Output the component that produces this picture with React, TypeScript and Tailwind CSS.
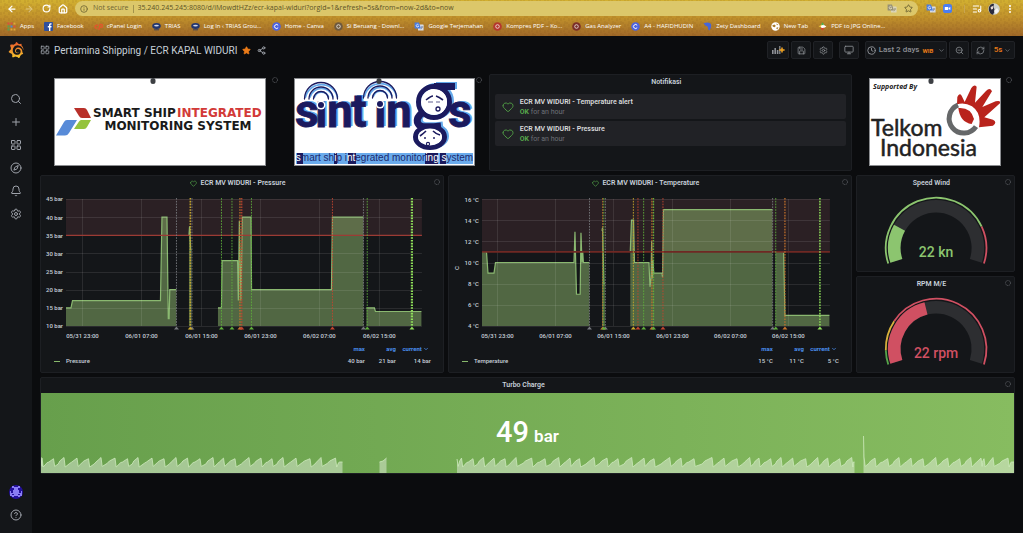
import React from "react";
import {
  ArrowLeft, ArrowRight, RotateCw, House, Info, Star, EllipsisVertical, ListMusic, Search, Plus, LayoutGrid,
  Compass, Bell, Settings, CircleHelp, Heart, Save, Monitor, Clock, ZoomOut, RefreshCw, ChevronDown, Share2,
} from "lucide-react";
import { SiGrafana } from "react-icons/si";

type Point = [number, number];
type Mark = { x: number; color: string; width?: number };

/* ---------- browser bar ---------- */

function AppsIcon() {
  const colors = ["#d9503f", "#d9503f", "#e0a63a", "#5aa052", "#4d86d8", "#d9503f", "#5aa052", "#e0a63a", "#e0a63a"];
  return (
    <svg viewBox="0 0 9 9" className="size-[9px]">
      {colors.map((c, i) => (
        <rect key={i} x={(i % 3) * 3 + 0.5} y={Math.floor(i / 3) * 3 + 0.5} width="2" height="2" fill={c} />
      ))}
    </svg>
  );
}

function Disc({ fill, letter }: { fill: string; letter?: "C" | "o" }) {
  return (
    <svg viewBox="0 0 9 9" className="size-[9px]" fill="none" stroke="#fff">
      <circle cx="4.5" cy="4.5" r="4.3" fill={fill} stroke="none" />
      {letter === "C" && <path d="M6.2 3.4A2 2 0 1 0 6.2 5.6" strokeWidth="1" />}
      {letter === "o" && <circle cx="4.5" cy="4.5" r="1.8" strokeWidth="1" strokeOpacity="0.7" />}
    </svg>
  );
}

function FacebookIcon() {
  return (
    <svg viewBox="0 0 9 9" className="size-[9px]">
      <rect width="9" height="9" rx="1" fill="#2f4f9c" />
      <path d="M5 9V5.4H3.8V4H5V3.1C5 1.9 5.7 1.3 6.7 1.3H7.6V2.6H7C6.5 2.6 6.4 2.9 6.4 3.3V4H7.6L7.4 5.4H6.4V9Z" fill="#fff" />
    </svg>
  );
}

function CpanelIcon() {
  return (
    <svg viewBox="0 0 9 9" className="size-[9px]" fill="none" stroke="#e0582c" strokeWidth="1.4">
      <path d="M4 3.2H2.6A1.6 1.6 0 0 0 2.6 6.4H3.4M4.8 8L6 2.4H7A1.4 1.4 0 0 1 7 5.4H6" />
    </svg>
  );
}

function TriasIcon() {
  return (
    <svg viewBox="0 0 9 9" className="size-[9px]">
      <ellipse cx="4.5" cy="4" rx="4.3" ry="3" fill="#23366f" />
      <ellipse cx="4.5" cy="3.6" rx="2.4" ry="0.9" fill="#cfd6ea" />
      <rect x="2" y="7.3" width="5" height="1" fill="#3a3f5c" />
    </svg>
  );
}

function TranslateIcon() {
  return (
    <svg viewBox="0 0 10 9" className="h-[9px] w-[10px]">
      <rect x="4" y="2.6" width="5.6" height="6" rx="0.6" fill="#d5dbe6" />
      <path d="M0.6 0.6H5L7 6.6H1.2A0.6 0.6 0 0 1 0.6 6Z" fill="#4b7de0" />
      <path d="M4.6 3A1.3 1.3 0 1 0 4.7 4.2H3.6" fill="none" stroke="#fff" strokeWidth="0.7" />
      <path d="M7 5H9M8 4.4V5Q7.8 6.6 6.9 7.2" fill="none" stroke="#5a6a86" strokeWidth="0.6" />
    </svg>
  );
}

function ZetyIcon() {
  return (
    <svg viewBox="0 0 9 9" className="size-[9px]">
      <path d="M0.5 1.2Q5 -0.2 7.5 1.4Q9.4 4 6.4 8.6Q4.8 8 5 5.4Q4.4 3.8 2.6 3.8Z" fill="#4665d8" />
    </svg>
  );
}

function GlobeIcon() {
  return (
    <svg viewBox="0 0 9 9" className="size-[9px]">
      <circle cx="4.5" cy="4.5" r="4.2" fill="#fff" />
      <path d="M1.2 3.4L3.4 2.4L4.8 3.8L3.8 5.2L2 4.8ZM5.2 1.4L7.4 2.8L6 3.2ZM5 6L7.4 5L6.4 7.4Z" fill="#a97a2a" />
    </svg>
  );
}

function PdfIcon() {
  return (
    <svg viewBox="0 0 9 9" className="size-[9px]">
      <path d="M4.5 0.2L6.6 3.4H2.4Z" fill="#4fae4d" />
      <path d="M0.6 4.2L3.8 2.6V6Z" fill="#e8c33c" />
      <path d="M8.4 4.6L5.2 2.6V6.4Z" fill="#fff" />
      <path d="M4.5 8.8L2.6 5.6H6.4Z" fill="#d9402c" />
      <circle cx="4.5" cy="4.5" r="1.6" fill="#fff" />
    </svg>
  );
}

const bookmarks: { label: string; icon: React.ReactNode }[] = [
  { label: "Apps", icon: <AppsIcon /> },
  { label: "Facebook", icon: <FacebookIcon /> },
  { label: "cPanel Login", icon: <CpanelIcon /> },
  { label: "TRIAS", icon: <TriasIcon /> },
  { label: "Log In ‹ TRIAS Grou...", icon: <TriasIcon /> },
  { label: "Home - Canva", icon: <Disc fill="#4d63e0" letter="C" /> },
  { label: "Si Beruang - Downl...", icon: <Disc fill="#6f5a3e" letter="o" /> },
  { label: "Google Terjemahan", icon: <TranslateIcon /> },
  { label: "Kompres PDF – Ko...", icon: <Disc fill="#b5382e" letter="o" /> },
  { label: "Gas Analyzer", icon: <Disc fill="#7c2f28" letter="o" /> },
  { label: "A4 - HAFIDHUDIN", icon: <Disc fill="#4d63e0" letter="C" /> },
  { label: "Zety Dashboard", icon: <ZetyIcon /> },
  { label: "New Tab", icon: <GlobeIcon /> },
  { label: "PDF to JPG Online...", icon: <PdfIcon /> },
];

function BrowserBar() {
  const nav = "flex items-center justify-center text-white";
  return (
    <header className="relative shrink-0 overflow-hidden bg-linear-to-b from-[#d2b030] via-[#c0902b] to-[#9f6828] font-['Open_Sans','Noto_Sans',sans-serif] text-[7px]">
      <svg className="absolute inset-0 size-full" aria-hidden="true">
        <defs>
          <pattern id="weave" width="8" height="6" patternUnits="userSpaceOnUse">
            <path d="M1 0V3M5 3V6M3 1H5M6 5H8" stroke="#6d4310" strokeOpacity="0.18" strokeWidth="1" fill="none" />
          </pattern>
        </defs>
        <rect width="100%" height="100%" fill="url(#weave)" />
      </svg>
      <div className="relative flex h-[17px] items-center pr-2 pl-[6px]">
        <button aria-label="Back" className={`${nav} w-3`}><ArrowLeft size={10} strokeWidth={3} /></button>
        <button aria-label="Forward" className={`${nav} ml-[5px] w-3 opacity-40`}><ArrowRight size={10} strokeWidth={2.5} /></button>
        <button aria-label="Reload" className={`${nav} ml-[5px] w-3`}><RotateCw size={9} strokeWidth={3} /></button>
        <button aria-label="Home" className={`${nav} ml-[5px] w-3`}><House size={10} strokeWidth={3} /></button>
        <div className="ml-[6px] flex h-[15px] flex-1 items-center rounded-full bg-[#dcc76a] pr-[5px] pl-[5px] text-[#6f6534]">
          <Info size={8} strokeWidth={2.5} className="shrink-0" />
          <span className="ml-[5px] whitespace-nowrap">Not secure</span>
          <span className="mx-1 h-2 w-px bg-[#a3934c]" />
          <input
            aria-label="Address"
            readOnly
            value="35.240.245.245:8080/d/iMowdtHZz/ecr-kapal-widuri?orgId=1&refresh=5s&from=now-2d&to=now"
            className="min-w-0 flex-1 bg-transparent text-[#5d5428] outline-none"
          />
          <button aria-label="Translate page" className="opacity-70 grayscale"><TranslateIcon /></button>
          <button aria-label="Bookmark" className="ml-[7px]"><Star size={9} strokeWidth={2.5} /></button>
        </div>
        <button aria-label="Translate" className="ml-2"><TranslateIcon /></button>
        <button aria-label="Zoom" className="ml-[7px]">
          <svg viewBox="0 0 9 9" className="size-[9px]">
            <rect width="9" height="9" rx="2.6" fill="#4a7df0" />
            <path d="M1.8 3H5.2V6H1.8ZM5.7 4L7.3 3V6L5.7 5Z" fill="#fff" />
          </svg>
        </button>
        <span className="ml-3 h-2 w-px bg-[#c9a550]" />
        <button aria-label="Media" className="ml-[7px] text-white"><ListMusic size={10} strokeWidth={2.5} /></button>
        <button aria-label="Profile" className="ml-[6px]">
          <svg viewBox="0 0 12 12" className="size-3">
            <circle cx="6" cy="6" r="5.8" fill="#cfd2cd" />
            <path d="M3 11Q0 8 1 4Q3 0 6 1Q4.6 4 6.4 6Q7 9 5 11.7Z" fill="#2a2c3e" />
            <path d="M2.6 4L5 3L5 6L3 6.6Z" fill="#e9d8cf" />
            <path d="M6 8L9 5L11 8L8 11Z" fill="#f6f6f2" />
          </svg>
        </button>
        <button aria-label="Menu" className="ml-[5px] text-white"><EllipsisVertical size={10} strokeWidth={3} /></button>
      </div>
      <nav className="relative flex h-[19px] items-center gap-[10px] overflow-hidden pl-[7px] text-[6px] font-medium text-white">
        {bookmarks.map((b) => (
          <a key={b.label} href="#" className="flex shrink-0 items-center gap-1 whitespace-nowrap">
            {b.icon}
            {b.label}
          </a>
        ))}
      </nav>
    </header>
  );
}

/* ---------- side menu ---------- */

const menu = [
  { label: "Search", Icon: Search },
  { label: "Create", Icon: Plus },
  { label: "Dashboards", Icon: LayoutGrid },
  { label: "Explore", Icon: Compass },
  { label: "Alerting", Icon: Bell },
  { label: "Configuration", Icon: Settings },
];

function SideMenu() {
  return (
    <aside className="flex w-8 shrink-0 flex-col items-center bg-[#141619] pb-3 text-[#9fa3ab]">
      <svg className="absolute size-0" aria-hidden="true">
        <defs>
          <linearGradient id="flame" x1="0" y1="1" x2="0" y2="0">
            <stop offset="0" stopColor="#f6c82c" />
            <stop offset="1" stopColor="#ea5a2c" />
          </linearGradient>
        </defs>
      </svg>
      <a href="#" aria-label="Home dashboard" className="mt-[6px]">
        <SiGrafana size={16} className="fill-[url(#flame)]" />
      </a>
      <nav className="mt-[35px] flex flex-col gap-[11px]">
        {menu.map(({ label, Icon }) => (
          <a key={label} href="#" aria-label={label}><Icon size={12} strokeWidth={2} /></a>
        ))}
      </nav>
      <a href="#" aria-label="Profile" className="mt-auto">
        <svg viewBox="0 0 14 14" className="size-[14px]">
          <circle cx="7" cy="7" r="7" fill="#24109c" />
          <path d="M3 1H5V2H9V1H11V3H9V5H10V8H12V6H13V11H11V12H9V11H5V12H3V11H1V6H2V8H4V5H5V3H3Z" fill="#8a7cf5" />
          <path d="M3 9H5V10H3ZM9 9H11V10H9ZM6 12H8V13H6Z" fill="#24109c" />
        </svg>
      </a>
      <a href="#" aria-label="Help" className="mt-[10px]"><CircleHelp size={12} /></a>
    </aside>
  );
}

/* ---------- toolbar ---------- */

const tool = "flex h-[18px] items-center justify-center rounded-xs border border-[#202226] bg-[#141619] text-[#8e9196]";

function Toolbar() {
  return (
    <div className="flex h-7 items-center text-[#c7d0d9]">
      <LayoutGrid size={10} className="text-[#9fa3ab]" />
      <h1 className="ml-1 text-[10px] whitespace-nowrap">Pertamina Shipping / ECR KAPAL WIDURI</h1>
      <button aria-label="Mark as favourite" className="ml-[5px] text-[#eb7b18]"><Star size={9} fill="currentColor" /></button>
      <button aria-label="Share" className="ml-[6px] text-[#9fa3ab]"><Share2 size={9} strokeWidth={2.5} /></button>
      <div className="ml-auto flex items-center gap-[2px]">
        <button aria-label="Add panel" className={`${tool} w-[22px]`}>
          <svg viewBox="0 0 14 10" className="h-[10px] w-[14px]">
            <path d="M1 5H2.6V9H1ZM3.4 3H5V9H3.4ZM5.8 5H7.4V9H5.8ZM8.2 1H9.4V9H8.2Z" fill="#8e9196" />
            <path d="M11 2.4V7.6M8.4 5H13.6" stroke="#f5a623" strokeWidth="1.5" />
          </svg>
        </button>
        <button aria-label="Save dashboard" className={`${tool} w-5`}><Save size={9} /></button>
        <button aria-label="Dashboard settings" className={`${tool} w-5`}><Settings size={9} /></button>
        <button aria-label="Cycle view mode" className={`${tool} ml-1 w-5`}><Monitor size={10} /></button>
        <button className={`${tool} ml-1 w-[82px] gap-[3px] text-[8px] font-medium`}>
          <Clock size={9} strokeWidth={2.5} />
          <span className="whitespace-nowrap">Last 2 days</span>
          <span className="text-[6px] font-bold text-[#eb7b18]">WIB</span>
          <ChevronDown size={7} className="ml-[2px]" />
        </button>
        <button aria-label="Zoom out" className={`${tool} w-5`}><ZoomOut size={9} /></button>
        <div className="flex">
          <button aria-label="Refresh" className={`${tool} w-[19px]`}><RefreshCw size={9} /></button>
          <button className={`${tool} w-[25px] gap-[2px] text-[8px] font-medium text-[#eb7b18]`}>
            5s
            <ChevronDown size={7} className="text-[#8e9196]" />
          </button>
        </div>
      </div>
    </div>
  );
}

/* ---------- panels ---------- */

function Spinner() {
  return (
    <svg viewBox="0 0 8 8" className="absolute top-[2px] right-[2px] size-2" aria-hidden="true">
      <circle cx="4" cy="4" r="2.5" fill="none" stroke="#5c5f64" strokeWidth="0.9" strokeDasharray="1.2 0.6" />
    </svg>
  );
}

type PanelProps = { title: string; alert?: boolean; spinner?: boolean; className: string; children: React.ReactNode };

function Panel({ title, alert, spinner = true, className, children }: PanelProps) {
  return (
    <section className={`relative flex min-w-0 flex-col rounded-xs border border-[#1d1f23] bg-[#141619] ${className}`}>
      <h2 className="flex h-[14px] shrink-0 items-center justify-center gap-[3px] pr-2 text-[7px] font-semibold whitespace-nowrap text-[#c7d0d9]">
        {alert && <Heart size={7} strokeWidth={2.5} className="text-[#4f9a45]" />}
        {title}
      </h2>
      {spinner && <Spinner />}
      {children}
    </section>
  );
}

function ImagePanel({ className, children }: { className: string; children: React.ReactNode }) {
  return (
    <section className={`relative flex items-end justify-center pb-[5px] ${className}`}>
      <div className="relative border border-[#8b8d90] bg-white">
        {children}
      </div>
      <span className="absolute top-1 left-[47%] h-[6px] w-[5px] -translate-x-1/2 rounded-full bg-[#3c3f43]" />
      <Spinner />
    </section>
  );
}

function SmartShipLogo() {
  return (
    <svg viewBox="0 0 210 86" className="h-[86px] w-[210px]" fontFamily="'DejaVu Sans', sans-serif" fontSize="12" fontWeight="700">
      <path d="M19 29H29Q31 29 32 31L36 39H27Q25 39 24 37Z" fill="#b8302a" />
      <path d="M26 41H36L32 48Q31 50 29 50H19L24 42.500Q25 41 26 41Z" fill="#95c33d" />
      <path d="M12 41H22L14 54Q12.500 56.500 10 56.500H1L9 43Q10 41 12 41Z" fill="#588bd8" />
      <text x="38" y="38" fill="#1a1a1a">SMART SHIP</text>
      <text x="122" y="38" fill="#d23a38">INTEGRATED</text>
      <text x="123" y="51" fill="#1a1a1a" textAnchor="middle">MONITORING SYSTEM</text>
    </svg>
  );
}

function Waves({ x, y }: { x: number; y: number }) {
  return (
    <g fill="none" strokeLinecap="round">
      {[16.5, 12, 7.5].map((r) => (
        <g key={r}>
          <path d={`M${x - r + 1} ${y - 4}A${r} ${r} 0 0 1 ${x + r} ${y - 4}`} stroke="#63a8ea" strokeWidth="1.8" />
          <path d={`M${x - r} ${y - 2}A${r} ${r} 0 0 1 ${x + r} ${y - 2}`} stroke="#1b1a5e" strokeWidth="1.3" />
        </g>
      ))}
      <circle cx={x} cy={y + 4} r="4.5" fill="#fff" />
      <circle cx={x} cy={y + 4} r="3" fill="#1b1a5e" />
    </g>
  );
}

function LogoG({ color }: { color: string }) {
  return (
    <g fill="none" stroke={color} strokeWidth="5">
      <circle cx="139" cy="23" r="15.5" />
      <path d="M139 7.500H160" strokeWidth="7" />
      <path d="M128 33Q119 40 124 46Q128 49 146 47" strokeWidth="7" />
      <ellipse cx="135" cy="58" rx="14.500" ry="10.500" />
    </g>
  );
}

function SintingsLogo() {
  const word = (
    <>
      <text x="0 20 32 56 79 91" y="48">sıntın</text>
      <text x="153" y="48">s</text>
    </>
  );
  return (
    <svg viewBox="0 0 179 86" className="h-[86px] w-[179px]" fontFamily="Roboto, sans-serif" fontSize="46" fontWeight="700">
      <g fill="#63a8ea" transform="translate(2 -1)">{word}</g>
      <g transform="translate(2 -1)"><LogoG color="#63a8ea" /></g>
      <g fill="#1b1a5e" stroke="#1b1a5e" strokeWidth="0.8">{word}</g>
      <LogoG color="#1b1a5e" />
      <circle cx="139" cy="23" r="13" fill="#fff" />
      <ellipse cx="135" cy="58" rx="12" ry="8.500" fill="#fff" />
      <path d="M131 21Q136 17 138 17M141 17Q144 18 148 21M125 57Q129 54 131 52M138 52Q141 55 145 56" stroke="#1b1a5e" strokeWidth="1.6" fill="none" />
      <path d="M133 23H138M141 23H145M129 58L131 60M131 58L129 60M138 58L140 60M140 58L138 60" stroke="#1b1a5e" strokeWidth="0.7" />
      <circle cx="143" cy="30" r="2" stroke="#1b1a5e" strokeWidth="1.3" fill="none" />
      <circle cx="133" cy="65" r="1.600" stroke="#1b1a5e" strokeWidth="1.1" fill="none" />
      <Waves x={26} y={22} />
      <Waves x={85} y={21} />
      <rect x="1" y="74" width="177" height="11" fill="#6aabec" />
      <path d="M2 74H8V85H2ZM39 74H42V85H39ZM53 74H61V85H53ZM130 74H143V85H130ZM145 74H151V85H145Z" fill="#1b1a5e" />
      <text x="89.500" y="82" textAnchor="middle" fontFamily="'Liberation Sans', Arial, sans-serif" fontSize="10" fontWeight="400" fill="#1d2a6e">
        <tspan fill="#fff">s</tspan>mart sh<tspan fill="#fff">i</tspan>p i<tspan fill="#fff">nt</tspan>egrated monitor<tspan fill="#fff">ing</tspan> <tspan fill="#fff">s</tspan>ystem
      </text>
    </svg>
  );
}

function TelkomLogo() {
  return (
    <svg viewBox="0 0 130 86" className="h-[86px] w-[130px]">
      <g transform="scale(0.3333) translate(-901 -28)">
        <path
          d="M1162 104L1163 82Q1169 68 1176 78L1185 97L1205 55Q1213 42 1221 51L1216 99L1249 64Q1261 52 1267 65L1238 112L1278 95Q1294 91 1291 101L1244 143L1270 150Q1284 158 1270 168L1228 173Q1236 130 1207 110Q1185 97 1162 104Z"
          fill="#b9231c"
        />
        <circle cx="1182" cy="147" r="42" fill="#fff" />
        <path d="M1166 115Q1204 112 1213 148L1206 163Q1171 158 1166 115Z" fill="#b9231c" />
        <path d="M1165 106A44 44 0 1 0 1219 171" fill="none" stroke="#666869" strokeWidth="15" />
      </g>
      <g fontFamily="Lato, sans-serif" fontSize="23" fill="#222" stroke="#222" strokeWidth="0.5">
        <text x="1" y="57">Telkom</text>
        <text x="10" y="77">Indonesia</text>
      </g>
      <text x="3" y="10" fontFamily="'Open Sans', sans-serif" fontSize="7" fontStyle="italic" fontWeight="700" fill="#222">Supported By</text>
    </svg>
  );
}

function Notifications() {
  return (
    <ul className="flex flex-col gap-[2px] px-[5px] pt-[5px]">
      {["ECR MV WIDURI - Temperature alert", "ECR MV WIDURI - Pressure"].map((name) => (
        <li key={name} className="flex h-[25px] items-center gap-[6px] rounded-xs bg-[#212226] pl-[7px]">
          <Heart size={12} className="text-[#4f9a45]" />
          <div>
            <a href="#" className="block text-[7px] leading-[10px] font-semibold text-[#d8d9da]">{name}</a>
            <p className="text-[7px] leading-[10px] text-[#6d7076]">
              <span className="font-bold text-[#56a64b]">OK</span> for an hour
            </p>
          </div>
        </li>
      ))}
    </ul>
  );
}

/* ---------- time series ---------- */

type ChartProps = {
  origin: number;
  left: number;
  right: number;
  min: number;
  max: number;
  step: number;
  unit: string;
  limit: number;
  limitColor: string;
  limitWidth: number;
  ticks: number[];
  series: Point[][];
  marks: Mark[];
  axis?: string;
};

const times = ["05/31 23:00", "06/01 07:00", "06/01 15:00", "06/01 23:00", "06/02 07:00", "06/02 15:00"];
const TOP = 199;
const BOTTOM = 326;

function Chart(p: ChartProps) {
  const y = (v: number) => BOTTOM - ((v - p.min) / (p.max - p.min)) * (BOTTOM - TOP);
  const levels: number[] = [];
  for (let v = p.min; v <= p.max; v += p.step) levels.push(v);
  return (
    <svg viewBox={`${p.origin} 190 402 153`} className="h-[153px] w-full shrink-0" fontFamily="Roboto, sans-serif" fontSize="6" fontWeight="500" fill="#c7d0d9">
      <rect x={p.left} y={TOP} width={p.right - p.left} height={y(p.limit) - TOP} fill="#2b2024" />
      {p.series.map((run, i) => {
        const line = run.map(([x, v]) => `${x} ${y(v)}`).join("L");
        return (
          <g key={i}>
            <path d={`M${run[0][0]} ${BOTTOM}L${line}V${BOTTOM}Z`} fill="#9bc876" fillOpacity="0.46" />
            <path d={`M${line}`} fill="none" stroke="#8ab870" strokeWidth="1.2" />
          </g>
        );
      })}
      {levels.map((v) => (
        <g key={v}>
          <path d={`M${p.left} ${Math.round(y(v)) + 0.5}H${p.right}`} stroke="#fff" strokeOpacity="0.1" />
          <text x={p.left - 3} y={y(v) + 2.5} textAnchor="end">{`${v} ${p.unit}`}</text>
        </g>
      ))}
      {p.ticks.map((x, i) => (
        <g key={x}>
          <path d={`M${x} ${TOP}V${BOTTOM}`} stroke="#fff" strokeOpacity="0.1" />
          <text x={x} y="338.500" textAnchor="middle">{times[i]}</text>
        </g>
      ))}
      <path d={`M${p.left} ${y(p.limit)}H${p.right}`} stroke={p.limitColor} strokeWidth={p.limitWidth} />
      {p.marks.map((m) => (
        <g key={m.x}>
          <path d={`M${m.x} ${TOP - 1}V${BOTTOM}`} stroke={m.color} strokeWidth={m.width ?? 0.9} strokeDasharray="1.6 1.2" />
          <path d={`M${m.x - 2.5} 329.500L${m.x} 326.500L${m.x + 2.5} 329.500Z`} fill={m.color} />
        </g>
      ))}
      {p.axis && (
        <text x="459" y="268" textAnchor="middle" transform="rotate(-90 459 268)">{p.axis}</text>
      )}
    </svg>
  );
}

function Legend({ name, values }: { name: string; values: string[] }) {
  return (
    <table className="mr-3 ml-[13px] table-fixed text-right text-[6px] leading-[12px] font-medium text-[#c7d0d9]">
      <thead>
        <tr className="font-bold text-[#4a8ff0]">
          <th className="p-0" aria-label="Series" />
          <th className="w-8 p-0">max</th>
          <th className="w-[31px] p-0">avg</th>
          <th className="w-[35px] p-0 pr-[2px]">
            <button className="ml-auto flex items-center gap-px">current<ChevronDown size={6} strokeWidth={3} /></button>
          </th>
        </tr>
      </thead>
      <tbody>
        <tr>
          <td className="p-0">
            <span className="flex items-center gap-[6px]">
              <span className="h-px w-[6px] bg-[#87b86b]" />
              {name}
            </span>
          </td>
          {values.map((v) => (
            <td key={v} className="p-0 whitespace-nowrap">{v}</td>
          ))}
        </tr>
      </tbody>
    </table>
  );
}

const GRAY = "#77797e";
const GREEN = "#5fae3c";
const LIME = "#8fe05a";
const YELLOW = "#c9a82a";
const ORANGE = "#c8742c";
const RED = "#c4452f";

const pressure: Point[][] = [
  [[66, 15], [71, 15], [72.5, 17], [160.5, 17], [162, 40], [167, 40], [168.3, 12], [169.2, 12], [169.8, 20], [176.3, 20]],
  [[189, 35], [189.6, 37.5], [190.8, 31], [191.6, 31]],
  [[218, 15], [221.5, 15], [222.2, 28], [237.6, 28], [238.4, 17], [239.4, 39], [241, 17], [242.4, 40], [251, 40], [251.6, 20], [331.5, 20], [332.5, 40], [363.5, 40]],
  [[366.5, 15], [374.5, 15], [375.5, 14], [421.5, 14]],
];

const pressureMarks: Mark[] = [
  { x: 176.5, color: GRAY }, { x: 192, color: GRAY }, { x: 190.3, color: YELLOW, width: 1.4 },
  { x: 221.5, color: GREEN }, { x: 232, color: GREEN }, { x: 240, color: ORANGE, width: 1.2 }, { x: 241.8, color: RED, width: 1.2 },
  { x: 251.5, color: GREEN }, { x: 332.5, color: RED }, { x: 363.5, color: GRAY }, { x: 367.3, color: GREEN },
  { x: 412, color: LIME, width: 2.2 },
];

const temperature: Point[][] = [
  [[482, 11], [486.5, 11], [488, 9], [494, 9], [495.5, 10], [574, 10], [575, 12.9], [576.5, 7], [580.2, 7], [581, 12.8], [582, 10], [582.8, 11], [583.4, 10], [589.3, 10]],
  [[602, 13], [602.6, 13.3], [604, 8], [604.8, 8]],
  [[630.3, 11], [631.5, 14], [633.6, 14], [634.5, 10], [649, 10], [650, 7.7], [651, 8.5], [651.7, 12], [652.4, 8.5], [653, 10.2], [653.8, 9], [662, 9], [662.6, 8.6], [663.5, 15], [772.5, 15]],
  [[775.5, 11], [783.7, 11], [785, 5], [829.5, 5]],
];

const temperatureMarks: Mark[] = [
  { x: 589.5, color: GRAY }, { x: 605.4, color: GRAY }, { x: 602.7, color: ORANGE }, { x: 603.8, color: GREEN },
  { x: 633.4, color: YELLOW }, { x: 638, color: RED }, { x: 643.7, color: GREEN }, { x: 652, color: ORANGE, width: 1.2 },
  { x: 653.6, color: GREEN, width: 1.2 }, { x: 663, color: RED }, { x: 772.7, color: GRAY }, { x: 775.8, color: GREEN },
  { x: 785, color: ORANGE, width: 1.2 }, { x: 820, color: LIME, width: 1.5 },
];

/* ---------- gauges ---------- */

function arc(r: number, from: number, to: number) {
  const at = (deg: number) => {
    const a = (deg * Math.PI) / 180;
    return `${79 + r * Math.cos(a)} ${58 - r * Math.sin(a)}`;
  };
  return `M${at(from)}A${r} ${r} 0 ${from - to > 180 ? 1 : 0} 1 ${at(to)}`;
}

type Band = { from: number; to: number; color: string };

function Gauge({ label, color, value, bands }: { label: string; color: string; value: number; bands: Band[] }) {
  return (
    <svg viewBox="0 0 157 81" className="h-[81px] w-full" fill="none">
      <path d={arc(41.8, 198, -18)} stroke="#2d2e31" strokeWidth="12.600" />
      <path d={arc(41.8, 198, value)} stroke={color} strokeWidth="12.600" />
      {bands.map((b) => (
        <path key={b.from} d={arc(50.3, b.from, b.to)} stroke={b.color} strokeWidth="1.800" />
      ))}
      <text x="79" y="67" textAnchor="middle" fontFamily="Roboto, sans-serif" fontSize="14" fontWeight="500" fill={color}>{label}</text>
    </svg>
  );
}

/* ---------- stat ---------- */

const teeth: number[][] = [
  [41, 42, 53.5, 64, 77, 88.5, 101, 115, 127.5, 138, 152, 164, 176, 187.5, 200, 213, 223.5, 235, 249, 261, 272, 283, 296, 310, 321, 335.5, 342.5],
  [457, 461.5, 473, 483.5, 494, 505, 516, 531.7, 545, 558.7, 570, 579.5, 594, 607, 618, 631.7, 644, 654, 669.7, 681, 694, 712, 724, 737, 749.7, 759, 770.7, 781, 792.7, 805.7, 817.7, 827.7, 839.7, 851.7, 854.5],
  [864, 875, 887.7, 899, 911, 923, 935.7, 947.7, 959.7, 970.7, 981, 984, 993, 1008, 1014],
];

function saw(xs: number[], first: string) {
  let d = first;
  for (let i = 1; i < xs.length; i++) {
    const a = xs[i - 1];
    const w = xs[i] - a;
    const peak = i === xs.length - 1 ? 463 : 458.5 + (i % 3) * 0.6;
    d += `L${a + 1.2} ${468 - (i % 2) * 0.6}L${a + w * 0.45} ${465 - (i % 3) * 0.7}L${a + w * 0.6} ${463 - (i % 2)}L${xs[i]} ${peak}`;
  }
  return d;
}

function TurboCharge() {
  const runs = [
    { d: saw(teeth[0], "41 458"), from: 41 },
    { d: "379.5 463L383 462L386.500 459", from: 379.5 },
    { d: saw(teeth[1], "457 460"), from: 457 },
    { d: saw(teeth[2], "863.500 437L864 458"), from: 863.5 },
  ];
  return (
    <div className="relative mt-px flex flex-1 items-center justify-center bg-linear-to-r from-[#679f4c] to-[#87bc60]">
      <svg viewBox="41 434 973 40" preserveAspectRatio="none" className="absolute inset-x-0 bottom-0 h-10 w-full">
        {runs.map((r) => (
          <g key={r.from}>
            <path d={`M${r.from} 474L${r.d}V474Z`} fill="#fff" fillOpacity="0.4" />
            <path d={`M${r.d}`} fill="none" stroke="#cdeabb" strokeWidth="0.8" />
          </g>
        ))}
      </svg>
      <p className="relative flex items-baseline gap-[5px] font-medium text-white">
        <span className="text-[29px] leading-[32px]">49</span>
        <span className="text-[17px] font-semibold">bar</span>
      </p>
    </div>
  );
}

export default function App() {
  return (
    <div className="flex min-h-screen flex-col bg-[#0b0c0e] font-[Roboto,sans-serif]">
      <BrowserBar />
      <div className="flex flex-1">
        <SideMenu />
        <main className="min-w-0 flex-1 px-2">
          <Toolbar />
          <div className="mt-[10px] grid auto-rows-[97px] grid-cols-24 gap-1">
            <ImagePanel className="col-span-6"><SmartShipLogo /></ImagePanel>
            <ImagePanel className="col-span-5"><SintingsLogo /></ImagePanel>
            <Panel title="Notifikasi" spinner={false} className="col-span-9"><Notifications /></Panel>
            <ImagePanel className="col-span-4"><TelkomLogo /></ImagePanel>

            <Panel title="ECR MV WIDURI - Pressure" alert className="col-span-10 row-span-2">
              <Chart
                origin={41} left={66} right={422} min={10} max={45} step={5} unit="bar" limit={35}
                limitColor="#9c3b34" limitWidth={1.2} ticks={[82.5, 141.5, 201.5, 260.5, 319.5, 379.5]}
                series={pressure} marks={pressureMarks}
              />
              <Legend name="Pressure" values={["40 bar", "21 bar", "14 bar"]} />
            </Panel>
            <Panel title="ECR MV WIDURI - Temperature" alert className="col-span-10 row-span-2">
              <Chart
                origin={449} left={482} right={830} min={4} max={16} step={2} unit="°C" limit={11}
                limitColor="#6f2823" limitWidth={1.8} ticks={[497.5, 555.5, 613.5, 672.5, 730.5, 788.5]}
                series={temperature} marks={temperatureMarks} axis="C"
              />
              <Legend name="Temperature" values={["15 °C", "11 °C", "5 °C"]} />
            </Panel>
            <Panel title="Speed Wind" className="col-span-4">
              <Gauge
                label="22 kn" color="#8cc56f" value={151}
                bands={[{ from: 198, to: 25, color: "#8cc56f" }, { from: 25, to: -18, color: "#d05062" }]}
              />
            </Panel>
            <Panel title="RPM M/E" className="col-span-4">
              <Gauge
                label="22 rpm" color="#d05062" value={104}
                bands={[
                  { from: 198, to: 181.5, color: "#56a64b" },
                  { from: 181.5, to: 146.5, color: "#d9b23c" },
                  { from: 146.5, to: -18, color: "#d05062" },
                ]}
              />
            </Panel>

            <Panel title="Turbo Charge" className="col-span-24"><TurboCharge /></Panel>
          </div>
        </main>
      </div>
    </div>
  );
}
